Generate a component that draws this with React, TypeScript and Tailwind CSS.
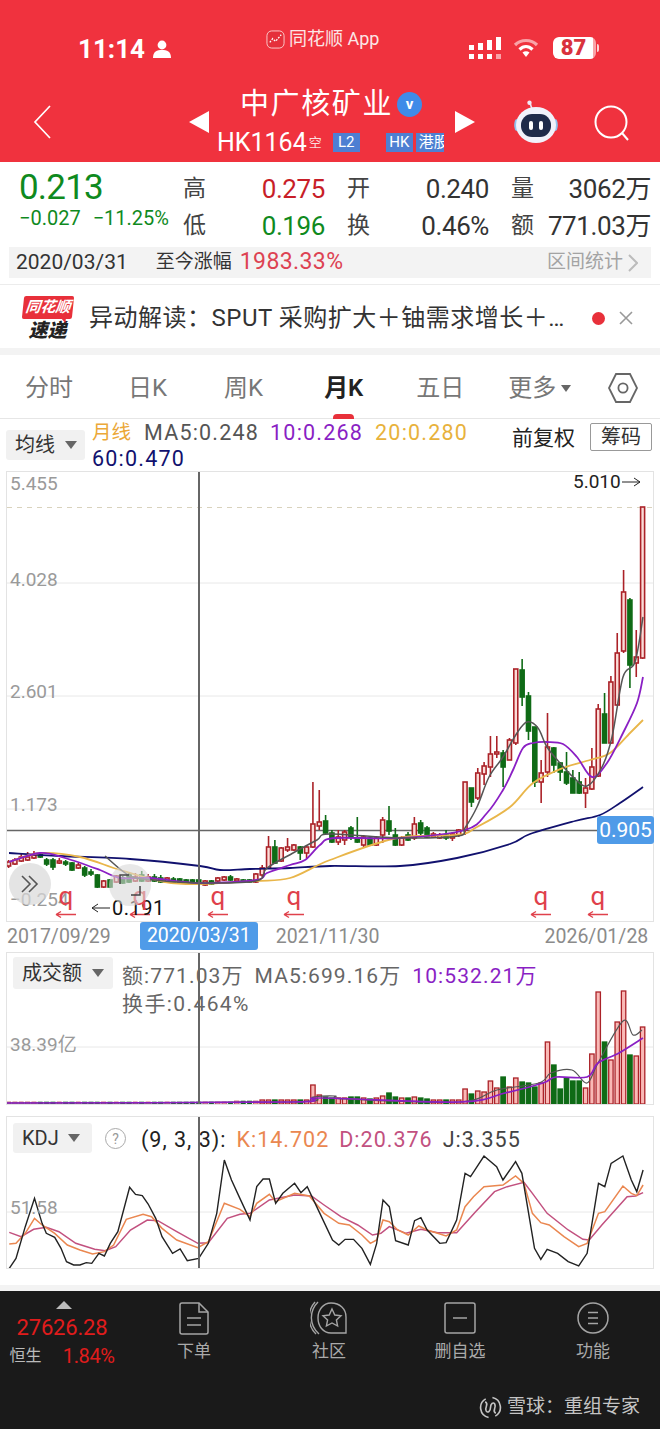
type Candle = [string, number, number, number, number];

// page-pixel coordinates: colour, body top, body bottom, wick top, wick bottom
const candles: Candle[] = [
  ['r', 862, 866, 860, 868], ['r', 860, 864, 858, 865], ['r', 857, 861, 854, 862], ['r', 857, 860, 852, 861],
  ['r', 855, 858, 851, 859], ['g', 854, 857, 852, 858], ['g', 860, 864, 858, 866], ['g', 860, 867, 858, 870],
  ['r', 861, 863, 858, 864], ['g', 862, 864, 860, 866], ['g', 863, 870, 862, 871], ['r', 865, 868, 863, 869],
  ['g', 868, 875, 866, 877], ['g', 872, 874, 869, 876], ['g', 875, 887, 874, 888], ['r', 881, 887, 880, 888],
  ['g', 880, 887, 879, 888], ['r', 876, 882, 875, 883], ['g', 878, 883, 876, 884], ['g', 875, 882, 872, 883],
  ['r', 877, 881, 873, 882], ['g', 875, 881, 871, 882], ['r', 877, 881, 874, 882], ['g', 877, 881, 874, 882],
  ['g', 878, 882, 875, 883], ['r', 878, 882, 877, 883], ['g', 879, 882, 877, 883], ['g', 879, 882, 878, 883],
  ['g', 880, 883, 879, 884], ['g', 880, 884, 879, 885], ['g', 880, 884, 879, 885], ['r', 881, 885, 880, 886],
  ['g', 881, 884, 880, 885], ['r', 878, 881, 877, 882], ['r', 877, 880, 876, 881], ['g', 877, 880, 875, 881],
  ['r', 879, 881, 878, 882], ['g', 880, 882, 879, 883], ['g', 880, 882, 879, 883], ['r', 874, 882, 873, 883],
  ['r', 868, 875, 865, 877], ['r', 847, 868, 836, 869], ['g', 847, 863, 840, 864], ['r', 848, 861, 847, 862],
  ['r', 847, 850, 838, 852], ['r', 845, 850, 844, 851], ['g', 847, 853, 846, 860], ['r', 847, 853, 845, 858],
  ['r', 824, 847, 782, 848], ['r', 822, 826, 790, 830], ['g', 821, 833, 815, 834], ['g', 833, 842, 830, 843],
  ['r', 837, 842, 830, 845], ['r', 832, 840, 830, 845], ['g', 828, 837, 826, 840], ['g', 838, 842, 817, 843],
  ['r', 837, 845, 835, 847], ['g', 838, 845, 836, 846], ['r', 838, 845, 836, 846], ['r', 820, 835, 817, 843],
  ['g', 821, 831, 806, 835], ['g', 835, 845, 828, 846], ['r', 838, 845, 836, 846], ['g', 835, 840, 832, 841],
  ['r', 824, 838, 817, 840], ['g', 823, 833, 820, 835], ['g', 828, 837, 826, 838], ['r', 834, 837, 832, 838],
  ['r', 835, 838, 833, 839], ['g', 835, 838, 830, 840], ['r', 834, 838, 832, 841], ['r', 830, 835, 829, 837],
  ['r', 782, 830, 782, 835], ['g', 788, 802, 788, 807], ['r', 773, 798, 768, 800], ['r', 766, 774, 762, 785],
  ['r', 754, 767, 736, 777], ['r', 752, 754, 736, 758], ['g', 753, 767, 750, 787], ['r', 740, 760, 738, 760],
  ['r', 669, 743, 669, 745], ['g', 670, 697, 659, 706], ['g', 696, 731, 692, 740], ['g', 727, 782, 727, 787],
  ['r', 773, 782, 760, 803], ['r', 747, 772, 713, 777], ['g', 748, 765, 747, 773], ['g', 763, 772, 762, 781],
  ['g', 772, 783, 752, 785], ['g', 778, 793, 770, 793], ['g', 782, 793, 772, 794], ['r', 788, 793, 778, 808],
  ['r', 767, 789, 748, 790], ['r', 709, 776, 704, 777], ['g', 714, 743, 693, 743], ['r', 682, 743, 676, 744],
  ['r', 653, 705, 633, 706], ['r', 592, 651, 570, 653], ['g', 600, 665, 598, 688], ['r', 657, 663, 630, 677],
  ['r', 507, 658, 507, 659],
];

const volumeTops = [
  ...Array(36).fill(1102), 1101, 1101, 1101, 1101, 1100, 1100, 1100, 1100, 1100, 1100, 1100, 1100,
  1085, 1095, 1097, 1098, 1098, 1098, 1097, 1097, 1098, 1099, 1098, 1096, 1093, 1097, 1098, 1098, 1097, 1098, 1099, 1100, 1100, 1100, 1100, 1100,
  1089, 1094, 1091, 1092, 1081, 1088, 1077, 1087, 1078, 1082, 1083, 1087, 1083, 1042, 1065, 1089, 1078, 1081, 1081, 1088, 1054, 992, 1042, 1060, 1022, 991, 1055, 1056, 1027,
];

const candleX = (i: number) => 8.6 + 6.34 * i;

const ma5 = [[105, 856], [130, 876], [155, 880], [199, 883], [256, 881], [267, 868], [293, 853], [317, 840], [330, 834], [400, 838], [458, 836], [465, 828], [477, 807], [489, 777], [503, 757], [517, 733], [527, 722], [538, 728], [547, 747], [560, 763], [573, 777], [587, 786], [602, 767], [612, 737], [623, 677], [635, 662], [643, 617]];
const ma10 = [[9, 862], [40, 853], [65, 858], [100, 870], [120, 878], [150, 878], [200, 883], [256, 880], [267, 873], [290, 865], [305, 860], [320, 845], [335, 838], [400, 838], [465, 830], [487, 813], [503, 790], [513, 770], [523, 748], [533, 743], [547, 742], [563, 744], [577, 757], [592, 777], [607, 763], [623, 733], [637, 703], [643, 677]];
const ma20 = [[9, 862], [40, 853], [80, 857], [120, 870], [165, 882], [200, 884], [255, 881], [290, 878], [330, 860], [397, 838], [457, 835], [477, 827], [510, 807], [533, 783], [563, 768], [590, 760], [610, 753], [630, 733], [643, 720]];
const ma60 = [[9, 853], [60, 856], [130, 859], [200, 866], [220, 870], [250, 869], [290, 868], [330, 866], [400, 866], [457, 858], [510, 844], [530, 834], [575, 821], [600, 815], [620, 803], [643, 787]];

const volGray = [[7, 1103], [290, 1102], [313, 1097], [335, 1096], [345, 1099], [459, 1102], [497, 1090], [539, 1083], [551, 1073], [572, 1070], [587, 1083], [598, 1063], [623, 1021], [633, 1035], [642, 1030]];
const volPurple = [[7, 1103], [290, 1102], [320, 1098], [459, 1102], [505, 1093], [543, 1083], [556, 1077], [587, 1077], [598, 1063], [619, 1053], [643, 1038]];

// KDJ points were read off a crop: x is scaled by 2.376, y is 950 + y/3
const toPage = (pts: number[][]) => pts.map(([x, y]) => [x / 2.376, 950 + y / 3]);

const kdjJ = toPage([[22, 955], [38, 925], [60, 830], [82, 745], [100, 820], [110, 850], [130, 862], [145, 895], [158, 935], [175, 945], [190, 945], [205, 938], [218, 940], [235, 910], [248, 918], [262, 880], [280, 845], [308, 712], [322, 733], [338, 737], [352, 762], [370, 805], [385, 860], [410, 910], [428, 897], [445, 932], [472, 925], [495, 880], [515, 790], [533, 630], [550, 690], [570, 745], [594, 810], [610, 710], [625, 687], [640, 687], [655, 760], [672, 730], [700, 700], [715, 728], [730, 710], [760, 790], [790, 870], [805, 885], [820, 868], [840, 868], [860, 895], [880, 943], [895, 880], [910, 750], [925, 770], [940, 872], [970, 885], [985, 812], [1000, 803], [1015, 840], [1045, 880], [1060, 878], [1085, 810], [1105, 670], [1118, 680], [1150, 618], [1180, 650], [1195, 690], [1225, 635], [1240, 670], [1270, 895], [1285, 928], [1300, 898], [1325, 910], [1350, 935], [1375, 948], [1395, 910], [1422, 700], [1437, 710], [1452, 640], [1480, 618], [1500, 690], [1513, 725], [1528, 660]]);
const kdjK = toPage([[22, 882], [38, 880], [60, 850], [82, 805], [100, 825], [130, 850], [160, 885], [190, 900], [220, 912], [248, 905], [270, 885], [300, 808], [340, 793], [360, 800], [385, 835], [420, 870], [470, 893], [495, 875], [533, 760], [570, 778], [594, 800], [610, 760], [640, 733], [655, 755], [700, 730], [735, 738], [770, 790], [805, 820], [830, 825], [860, 855], [880, 880], [895, 870], [910, 810], [925, 815], [945, 840], [970, 855], [995, 828], [1015, 840], [1060, 858], [1085, 840], [1105, 770], [1125, 740], [1150, 710], [1195, 705], [1225, 678], [1245, 700], [1265, 790], [1285, 818], [1305, 825], [1340, 860], [1375, 890], [1395, 880], [1422, 790], [1437, 785], [1480, 708], [1500, 730], [1513, 737], [1528, 705]]);
const kdjD = toPage([[22, 847], [50, 860], [80, 838], [110, 832], [140, 845], [180, 880], [225, 898], [250, 902], [275, 890], [310, 840], [350, 810], [375, 812], [420, 845], [470, 880], [495, 878], [540, 805], [570, 793], [594, 790], [640, 750], [700, 735], [740, 738], [770, 765], [810, 800], [850, 825], [885, 855], [905, 850], [925, 830], [965, 850], [1000, 838], [1040, 848], [1085, 848], [1130, 785], [1175, 725], [1205, 710], [1245, 697], [1265, 730], [1300, 790], [1350, 840], [1385, 868], [1400, 870], [1430, 825], [1490, 740], [1510, 738], [1528, 728]]);

const straight = (pts: number[][]) => pts.map((p) => p.join(',')).join(' ');

// catmull-rom through the points, the moving averages are smooth curves
const smooth = (pts: number[][]) => {
  let d = `M${pts[0][0]} ${pts[0][1]}`;
  for (let i = 0; i < pts.length - 1; i++) {
    const p0 = pts[Math.max(i - 1, 0)];
    const p1 = pts[i];
    const p2 = pts[i + 1];
    const p3 = pts[Math.min(i + 2, pts.length - 1)];
    d += ` C${p1[0] + (p2[0] - p0[0]) / 6} ${p1[1] + (p2[1] - p0[1]) / 6} ${p2[0] - (p3[0] - p1[0]) / 6} ${p2[1] - (p3[1] - p1[1]) / 6} ${p2[0]} ${p2[1]}`;
  }
  return d;
};

const RED = '#ab2228';
const GREEN = '#0f6b16';

function MainChart() {
  return (
    <svg viewBox="7 472 646 449" className="block h-full w-full">
      <line x1="7" x2="653" y1="507.5" y2="507.5" stroke="#d9d2bd" strokeDasharray="5 5" />
      {[583, 696, 809].map((y) => (
        <line key={y} x1="7" x2="653" y1={y} y2={y} stroke="#e8e8e8" />
      ))}
      <line x1="7" x2="597" y1="830.5" y2="830.5" stroke="#666" strokeWidth="1.5" />
      {candles.map(([c, top, bot, hi, lo], i) => {
        const x = candleX(i);
        const col = c === 'r' ? RED : GREEN;
        return (
          <g key={i}>
            <line x1={x} x2={x} y1={hi} y2={lo} stroke={col} strokeWidth="1.6" />
            <rect
              x={x - 2}
              y={top}
              width="4"
              height={Math.max(bot - top, 1.5)}
              fill={c === 'r' ? '#fbdcd8' : col}
              stroke={col}
              strokeWidth="1.6"
            />
          </g>
        );
      })}
      <path d={smooth(ma60)} fill="none" stroke="#11116e" strokeWidth="1.8" />
      <path d={smooth(ma20)} fill="none" stroke="#e9b64a" strokeWidth="1.8" />
      <path d={smooth(ma10)} fill="none" stroke="#8a1fc4" strokeWidth="1.8" />
      <path d={smooth(ma5)} fill="none" stroke="#555" strokeWidth="1.5" />
      {[66, 140, 218, 294, 541, 598].map((x) => (
        <path key={x} d={`M${x - 10} 914.5 H${x + 10} M${x - 10} 914.5 l5 -3 M${x - 10} 914.5 l5 3`} fill="none" stroke="#e0414b" strokeWidth="1.4" />
      ))}
      <path d="M92 908 H110 M92 908 l6 -4 M92 908 l6 4" fill="none" stroke="#222" strokeWidth="1" />
      <path d="M622 482 H640 M640 482 l-6 -4 M640 482 l-6 4" fill="none" stroke="#222" strokeWidth="1" />
    </svg>
  );
}

function VolumeChart() {
  return (
    <svg viewBox="7 953 646 151" className="block h-full w-full">
      <line x1="7" x2="653" y1="1047" y2="1047" stroke="#e8e8e8" />
      {candles.map(([c], i) => {
        const x = candleX(i);
        const top = volumeTops[i];
        const col = c === 'r' ? RED : GREEN;
        return (
          <rect
            key={i}
            x={x - 2.2}
            y={top}
            width="4.4"
            height={1104 - top}
            fill={c === 'r' ? '#f9b9b6' : col}
            stroke={col}
            strokeWidth={top > 1100 ? 0.6 : 1.3}
          />
        );
      })}
      <path d={smooth(volGray)} fill="none" stroke="#555" strokeWidth="1.2" />
      <path d={smooth(volPurple)} fill="none" stroke="#8a1fc4" strokeWidth="1.7" />
    </svg>
  );
}

function KdjChart() {
  return (
    <svg viewBox="7 1117 646 151" className="block h-full w-full">
      <line x1="7" x2="653" y1="1212" y2="1212" stroke="#e8e8e8" />
      <polyline points={straight(kdjD)} fill="none" stroke="#c2517f" strokeWidth="1.5" />
      <polyline points={straight(kdjK)} fill="none" stroke="#ea8750" strokeWidth="1.5" />
      <polyline points={straight(kdjJ)} fill="none" stroke="#222" strokeWidth="1.4" />
    </svg>
  );
}

function Caret() {
  return <span className="block h-0 w-0 border-x-[6px] border-t-[8px] border-x-transparent border-t-[#666]" />;
}

function QuoteGroup({ w, labels, values }: { w: string; labels: string[]; values: { text: string; color: string }[] }) {
  return (
    <div className={`flex flex-col gap-[9px] ${w}`}>
      {labels.map((label, i) => (
        <div key={label} className="flex h-[28px] items-center justify-between">
          <span className="text-[23px] text-[#444]">{label}</span>
          <span className={`text-[26px] tracking-[-0.4px] ${values[i].color}`}>{values[i].text}</span>
        </div>
      ))}
    </div>
  );
}

function NavItem({ label, w, icon }: { label: string; w: string; icon: React.ReactNode }) {
  return (
    <div className={`flex flex-col items-center ${w}`}>
      <div className="flex h-[34px] items-center justify-center">{icon}</div>
      <span className="mt-[6px] text-[17px] leading-[20px] text-[#aaa]">{label}</span>
    </div>
  );
}

export default function App() {
  return (
    <div className="h-[1429px] w-[660px] overflow-hidden bg-white font-['Roboto','Noto_Sans_CJK_SC',sans-serif]">
      {/* red header */}
      <div className="h-[162px] bg-[#f0323e] text-white">
        <div className="flex h-[90px] items-start pl-[78px] pt-[35px]">
          <span className="text-[26px] font-bold leading-[28px]">11:14</span>
          <svg viewBox="0 0 18 18" className="ml-[8px] mt-[5px] h-[18px] w-[18px]" fill="#fff">
            <circle cx="9" cy="5" r="4.4" />
            <path d="M0 18 C0 11.5 4 10 9 10 S18 11.5 18 18 Z" />
          </svg>
          <div className="ml-[95px] -mt-[6px] flex items-center gap-[4px]">
            <svg viewBox="0 0 20 20" className="h-[19px] w-[19px]">
              <rect x="1" y="1" width="18" height="18" rx="5" fill="#e5303b" stroke="#fbd0d0" strokeWidth="1" />
              <path d="M4 13 L7 9 L10 12 L16 5" fill="none" stroke="#fff" strokeWidth="1.3" strokeDasharray="2 1.4" />
            </svg>
            <span className="text-[18px] leading-[20px] text-[#fbe6e6]">同花顺 App</span>
          </div>
          <svg viewBox="0 0 33 22" className="ml-[90px] mt-[2px] h-[22px] w-[33px]" fill="#fff">
            <rect x="0" y="8" width="5" height="5" />
            <rect x="0" y="17" width="5" height="5" />
            <rect x="9" y="6" width="5" height="7" />
            <rect x="9" y="17" width="5" height="5" />
            <rect x="18" y="3" width="5" height="10" />
            <rect x="18" y="17" width="5" height="5" />
            <rect x="27" y="0" width="5" height="13" />
            <rect x="27" y="17" width="5" height="5" fill="#f9a3a8" />
          </svg>
          <svg viewBox="0 0 26 20" className="ml-[11px] mt-[3px] h-[20px] w-[26px]" fill="none" strokeLinecap="butt">
            <path d="M2 7 C8 1 18 1 24 7" stroke="#f9a3a8" strokeWidth="3.2" />
            <path d="M6.5 11.5 C10.5 7.5 15.5 7.5 19.5 11.5" stroke="#fff" strokeWidth="3.2" />
            <path d="M9.5 14.5 L13 19 L16.5 14.5 C14.5 12.8 11.5 12.8 9.5 14.5 Z" fill="#fff" />
          </svg>
          <div className="ml-[14px] mt-[2px] flex items-center">
            <div className="flex h-[22px] w-[43px] items-center overflow-hidden rounded-[6px] bg-[#f9a3a8]">
              <div className="flex h-full w-[40px] items-center justify-center rounded-l-[6px] bg-white text-[22px] font-black leading-[22px] text-[#d9323d]">
                87
              </div>
            </div>
            <span className="ml-[1px] h-[8px] w-[2px] rounded-r-sm bg-[#fbd3d5]" />
          </div>
        </div>

        <div className="flex h-[72px] items-start pl-[33px]">
          <svg viewBox="0 0 18 34" className="mt-[15px] h-[34px] w-[18px]" fill="none" stroke="#fff" strokeWidth="1.7">
            <path d="M17 1 L2 17 L17 33" />
          </svg>
          <span className="ml-[138px] mt-[21px] h-0 w-0 border-y-[11px] border-r-[20px] border-y-transparent border-r-white" />
          <div className="flex w-[246px] flex-col">
            <div className="flex h-[28px] items-center pl-[31px]">
              <span className="text-[29px] leading-[28px] tracking-[1.6px]">中广核矿业</span>
              <span className="ml-[4px] flex h-[25px] w-[25px] items-center justify-center rounded-full bg-[#3f8be8] text-[15px] font-bold leading-none">
                v
              </span>
            </div>
            <div className="mt-[14px] flex h-[21px] items-center pl-[8px]">
              <span className="text-[25px] leading-[21px]">HK1164</span>
              <span className="ml-[2px] text-[13px] leading-none text-[#fbdcdc]">空</span>
              <span className="ml-[11px] flex h-[19px] w-[27px] items-center justify-center bg-[#4e7fd2] text-[15px] leading-none">L2</span>
              <span className="ml-[26px] flex h-[19px] w-[27px] items-center justify-center bg-[#4e7fd2] text-[15px] leading-none">HK</span>
              <span className="ml-[3px] flex h-[19px] w-[28px] items-center overflow-hidden whitespace-nowrap bg-[#4e7fd2] pl-[3px] text-[15px] leading-none">
                港股
              </span>
            </div>
          </div>
          <span className="mt-[21px] h-0 w-0 border-y-[11px] border-l-[20px] border-y-transparent border-l-white" />
          <svg viewBox="0 0 44 44" className="ml-[39px] mt-[10px] h-[44px] w-[44px]">
            <path d="M18 9 L16 3" stroke="#e8e4f2" strokeWidth="1.6" />
            <circle cx="15.5" cy="2.8" r="2.2" fill="#f0eaf6" />
            <ellipse cx="2.5" cy="25" rx="2.3" ry="6" fill="#8fc2ef" />
            <ellipse cx="41.5" cy="25" rx="2.3" ry="6" fill="#8fc2ef" />
            <ellipse cx="22" cy="25" rx="20" ry="18" fill="#f1f2fb" />
            <rect x="7" y="14" width="30" height="23" rx="11" fill="#1f2b4a" />
            <rect x="15" y="21" width="4" height="9" rx="2" fill="#fff" />
            <rect x="25" y="21" width="4" height="9" rx="2" fill="#fff" />
          </svg>
          <svg viewBox="0 0 36 36" className="ml-[36px] mt-[15px] h-[36px] w-[36px]" fill="none" stroke="#fff" strokeWidth="2">
            <circle cx="17" cy="17" r="15.5" />
            <path d="M28 28 L34 35" />
          </svg>
        </div>
      </div>

      {/* quote */}
      <div className="h-[123px] border-b border-[#ececec]">
        <div className="flex h-[85px] pl-[19px] pr-[9px] pt-[8px]">
          <div className="w-[164px]">
            <div className="text-[35px] leading-[35px] tracking-[-0.8px] text-[#0f8a1e]">0.213</div>
            <div className="mt-[1px] flex gap-[12px] text-[20px] leading-[24px] text-[#0f8a1e]">
              <span>−0.027</span>
              <span>−11.25%</span>
            </div>
          </div>
          <div className="mt-[5px] flex gap-[22px]">
            <QuoteGroup
              w="w-[142px]"
              labels={['高', '低']}
              values={[
                { text: '0.275', color: 'text-[#c81e28]' },
                { text: '0.196', color: 'text-[#0f8a1e]' },
              ]}
            />
            <QuoteGroup
              w="w-[142px]"
              labels={['开', '换']}
              values={[
                { text: '0.240', color: 'text-[#333]' },
                { text: '0.46%', color: 'text-[#333]' },
              ]}
            />
            <QuoteGroup
              w="w-[140px]"
              labels={['量', '额']}
              values={[
                { text: '3062万', color: 'text-[#333]' },
                { text: '771.03万', color: 'text-[#333]' },
              ]}
            />
          </div>
        </div>
        <div className="relative ml-[9px] flex h-[31px] w-[642px] items-center bg-[#f3f3f3] pl-[7px] pr-[13px]">
          <span className="text-[21px] text-[#333]">2020/03/31</span>
          <span className="ml-[28px] text-[19px] text-[#333]">至今涨幅</span>
          <span className="ml-[8px] text-[23px] tracking-[0.4px] text-[#dd4252]">1983.33%</span>
          <span className="ml-auto text-[19px] text-[#a3a3a3]">区间统计</span>
          <svg viewBox="0 0 10 18" className="ml-[5px] h-[18px] w-[10px]" fill="none" stroke="#bbb" strokeWidth="2">
            <path d="M1 1 L9 9 L1 17" />
          </svg>
        </div>
      </div>

      {/* news strip */}
      <div className="flex h-[70px] items-center border-b-[7px] border-[#f3f3f3] pl-[22px] pt-[3px]">
        <div className="flex w-[51px] flex-col items-center">
          <span className="relative flex h-[23px] w-[50px] -skew-x-6 items-center justify-center rounded-[2px] bg-[#e8303a] text-[15px] font-bold italic leading-none text-white">
            同花顺
            <span className="absolute -bottom-[4px] right-[6px] h-0 w-0 border-l-[5px] border-t-[5px] border-l-transparent border-t-[#e8303a]" />
          </span>
          <span className="mt-[2px] text-[19px] font-black italic leading-[20px] text-[#222]">速递</span>
        </div>
        <span className="ml-[16px] w-[482px] whitespace-nowrap text-[24px] leading-[30px] tracking-[0.5px] text-[#333]">
          异动解读：SPUT 采购扩大＋铀需求增长＋…
        </span>
        <span className="ml-[21px] h-[13px] w-[13px] rounded-full bg-[#e8303a]" />
        <svg viewBox="0 0 14 14" className="ml-[14px] h-[14px] w-[14px]" fill="none" stroke="#999" strokeWidth="1.6">
          <path d="M1 1 L13 13 M13 1 L1 13" />
        </svg>
      </div>

      {/* period tabs */}
      <div className="flex h-[64px] items-center border-b border-[#e6e6e6] pl-[25px] pt-[3px] text-[24px] text-[#777]">
        <span>分时</span>
        <span className="ml-[55px]">日K</span>
        <span className="ml-[57px]">周K</span>
        <span className="relative ml-[61px] font-semibold text-[#222]">
          月K
          <span className="absolute -bottom-[13px] left-[9px] h-[5px] w-[21px] rounded-t-sm bg-[#e8303a]" />
        </span>
        <span className="ml-[53px]">五日</span>
        <span className="ml-[44px]">更多</span>
        <span className="ml-[5px] h-0 w-0 border-x-[5px] border-t-[7px] border-x-transparent border-t-[#666]" />
        <svg viewBox="0 0 30 32" className="ml-[37px] h-[32px] w-[30px]" fill="none" stroke="#666" strokeWidth="1.8">
          <path d="M8 2 H22 L29 16 L22 30 H8 L1 16 Z" />
          <circle cx="15" cy="16" r="4.6" />
        </svg>
      </div>

      {/* legend row */}
      <div className="flex h-[52px]">
        <div className="ml-[6px] mt-[11px] flex h-[30px] w-[79px] items-center rounded-[3px] bg-[#f1f1f1] pl-[9px]">
          <span className="text-[20px] text-[#333]">均线</span>
          <span className="ml-[10px]">
            <Caret />
          </span>
        </div>
        <div className="ml-[7px] mt-[1px] w-[405px] text-[21.5px] leading-[26px] tracking-[1.2px]">
          <div className="flex whitespace-nowrap">
            <span className="w-[52px] text-[19.5px] tracking-normal text-[#eba838]">月线</span>
            <span className="text-[#555]">MA5:0.248</span>
            <span className="ml-[11px] text-[#8a1fc4]">10:0.268</span>
            <span className="ml-[12px] text-[#e8b23c]">20:0.280</span>
          </div>
          <div className="text-[#11116e]">60:0.470</div>
        </div>
        <span className="ml-[15px] mt-[5px] h-[30px] whitespace-nowrap text-[21px] leading-[28px] text-[#222]">前复权</span>
        <span className="ml-[15px] mt-[4px] flex h-[28px] w-[62px] items-center justify-center rounded-[2px] border border-[#999] text-[20px] text-[#333]">
          筹码
        </span>
      </div>

      {/* k line panel */}
      <div className="relative ml-[6px] h-[451px] w-[648px] border border-[#e3e3e3] text-[19px] leading-[22px] text-[#9a9a9a]">
        <MainChart />
        <span className="absolute left-[3px] top-[1px]">5.455</span>
        <span className="absolute left-[3px] top-[97px]">4.028</span>
        <span className="absolute left-[3px] top-[209px]">2.601</span>
        <span className="absolute left-[3px] top-[322px]">1.173</span>
        <span className="absolute left-[3px] top-[417px]">−0.254</span>
        <span className="absolute left-[566px] top-[-1px] text-[19px] text-[#222]">5.010</span>
        <span className="absolute left-[105px] top-[425px] text-[20px] tracking-[0.5px] text-[#111]">0.191</span>
        {[66, 140, 218, 294, 541, 598].map((x) => (
          <span key={x} className="absolute top-[410px] -translate-x-1/2 text-[26px] leading-[28px] text-[#e0414b]" style={{ left: x - 7 }}>
            q
          </span>
        ))}
        <span className="absolute left-[590px] top-[344px] flex h-[28px] w-[57px] items-center justify-center rounded-[3px] bg-[#4f9be8] text-[21px] text-white">
          0.905
        </span>
        <span className="absolute bottom-0 left-[191px] top-0 w-[1.5px] bg-[#666]" />
        <span className="absolute left-[2px] top-[391px] flex h-[42px] w-[42px] items-center justify-center rounded-full bg-[#d8d8d8]/70">
          <svg viewBox="0 0 20 18" className="h-[18px] w-[20px]" fill="none" stroke="#555" strokeWidth="1.6">
            <path d="M2 1 L10 9 L2 17 M9 1 L17 9 L9 17" />
          </svg>
        </span>
        <span className="absolute left-[102px] top-[392px] flex h-[42px] w-[42px] items-center justify-center rounded-full bg-[#d8d8d8]/60">
          <svg viewBox="0 0 22 22" className="h-[22px] w-[22px]" fill="none" stroke="#444" strokeWidth="1.5">
            <path d="M1 10 V1 H10 M21 12 V21 H12" />
          </svg>
        </span>
      </div>

      {/* date axis */}
      <div className="flex h-[30px] items-center pl-[7px] text-[19.5px] text-[#8b8b8b]">
        <span>2017/09/29</span>
        <span className="ml-[29px] flex h-[28px] w-[118px] items-center justify-center self-start rounded-[3px] bg-[#4f9be8] text-white">2020/03/31</span>
        <span className="ml-[18px]">2021/11/30</span>
        <span className="ml-[165px]">2026/01/28</span>
      </div>

      {/* turnover panel */}
      <div className="relative ml-[6px] h-[153px] w-[648px] border border-[#e3e3e3] text-[21px] leading-[24px] tracking-[1.1px] text-[#666]">
        <VolumeChart />
        <div className="absolute left-[6px] top-[4px] flex h-[32px] w-[100px] items-center rounded-[3px] bg-[#f1f1f1] pl-[9px] tracking-normal">
          <span className="text-[20px] text-[#333]">成交额</span>
          <span className="ml-[10px]">
            <Caret />
          </span>
        </div>
        <div className="absolute left-[115px] top-[11px] flex gap-[11px] whitespace-nowrap">
          <span>额:771.03万</span>
          <span>MA5:699.16万</span>
          <span className="text-[#8a1fc4]">10:532.21万</span>
        </div>
        <span className="absolute left-[115px] top-[39px] tracking-[1.4px]">换手:0.464%</span>
        <span className="absolute left-[3px] top-[80px] text-[19px] tracking-normal text-[#9a9a9a]">38.39亿</span>
        <span className="absolute bottom-0 left-[191px] top-0 w-[1.5px] bg-[#666]" />
      </div>

      {/* kdj panel */}
      <div className="relative ml-[6px] mt-[11px] h-[153px] w-[648px] border border-[#e3e3e3] text-[21.5px] leading-[24px] tracking-[1px]">
        <KdjChart />
        <div className="absolute left-[6px] top-[6px] flex h-[30px] w-[79px] items-center rounded-[3px] bg-[#f1f1f1] pl-[9px] tracking-normal">
          <span className="text-[20px] text-[#333]">KDJ</span>
          <span className="ml-[9px]">
            <Caret />
          </span>
        </div>
        <span className="absolute left-[98px] top-[11px] flex h-[21px] w-[21px] items-center justify-center rounded-full border-[1.5px] border-[#aaa] text-[14px] leading-none tracking-normal text-[#999]">
          ?
        </span>
        <div className="absolute left-[134px] top-[11px] flex gap-[10px] whitespace-nowrap">
          <span className="text-[#222]">(9, 3, 3):</span>
          <span className="text-[#ea8750]">K:14.702</span>
          <span className="text-[#c2517f]">D:20.376</span>
          <span className="text-[#444]">J:3.355</span>
        </div>
        <span className="absolute left-[3px] top-[80px] text-[19px] leading-[22px] tracking-normal text-[#9a9a9a]">51.58</span>
        <span className="absolute bottom-0 left-[191px] top-0 w-[1.5px] bg-[#666]" />
      </div>

      {/* bottom bar */}
      <div className="mt-[16px] h-[6px] bg-[#f3f3f3]" />
      <div className="h-[138px] bg-[#1a1a1a]">
        <div className="flex h-[100px] items-start pt-[10px]">
          <div className="flex w-[128px] flex-col items-center">
            <span className="h-0 w-0 border-x-[8px] border-b-[8px] border-x-transparent border-b-[#bbb]" />
            <span className="ml-[-4px] mt-[6px] text-[22px] leading-[26px] tracking-[-0.2px] text-[#e01c1c]">27626.28</span>
            <div className="ml-[-4px] mt-[2px] flex w-[105px] items-center justify-between leading-[26px]">
              <span className="text-[16px] text-[#bbb]">恒生</span>
              <span className="text-[20px] tracking-[-0.4px] text-[#e01c1c]">1.84%</span>
            </div>
          </div>
          <NavItem
            label="下单"
            w="ml-[15px] w-[102px]"
            icon={
              <svg viewBox="0 0 30 33" className="h-[33px] w-[30px]" fill="none" stroke="#a5a5a5" strokeWidth="1.5">
                <path d="M1 3 Q1 1 3 1 H20 L29 10 V30 Q29 32 27 32 H3 Q1 32 1 30 Z" />
                <path d="M20 1 V10 H29 M8 16 H22 M8 23 H22" />
              </svg>
            }
          />
          <NavItem
            label="社区"
            w="ml-[34px] w-[100px]"
            icon={
              <svg viewBox="0 0 38 34" className="h-[34px] w-[38px]" fill="none" stroke="#a5a5a5" strokeWidth="1.4">
                <path d="M21 2 C30 2 36 8 36 16 V32 H21 C13 32 8 25 8 17 C8 9 13 2 21 2 Z" />
                <path d="M8 1 C-1 10 -1 24 9 33 M5 1 C-3 10 -3 24 6 33" />
                <path d="M22 8 L24.8 14 L31 14.8 L26.4 19 L27.6 25 L22 22 L16.4 25 L17.6 19 L13 14.8 L19.2 14 Z" />
              </svg>
            }
          />
          <NavItem
            label="删自选"
            w="ml-[31px] w-[100px]"
            icon={
              <svg viewBox="0 0 32 32" className="h-[32px] w-[32px]" fill="none" stroke="#a5a5a5" strokeWidth="1.5">
                <rect x="1" y="1" width="30" height="30" rx="2" />
                <path d="M9 16 H23" />
              </svg>
            }
          />
          <NavItem
            label="功能"
            w="ml-[33px] w-[100px]"
            icon={
              <svg viewBox="0 0 32 32" className="h-[32px] w-[32px]" fill="none" stroke="#a5a5a5" strokeWidth="1.5">
                <circle cx="16" cy="16" r="15" />
                <path d="M11 10.5 H21 M11 16 H21 M11 21.5 H21" />
              </svg>
            }
          />
        </div>
        <div className="mt-[4px] flex items-center justify-end gap-[5px] pr-[20px] text-[#c4c4c4]">
          <svg viewBox="0 0 24 24" className="h-[23px] w-[23px]" fill="none" stroke="#c4c4c4" strokeWidth="1.7">
            <path d="M7 3 A10.5 10.5 0 0 0 10 22.4 M17 21 A10.5 10.5 0 0 0 14 1.6" />
            <path d="M6.5 6 C11 8.5 5.5 11 7.5 15.5 C9 18.5 12 15.5 12 12 C12 8.5 15 5.5 16.5 8.5 C18.5 13 13 15.5 17.5 18" />
          </svg>
          <span className="whitespace-nowrap text-[19px] leading-[24px]">雪球：重组专家</span>
        </div>
      </div>
    </div>
  );
}
